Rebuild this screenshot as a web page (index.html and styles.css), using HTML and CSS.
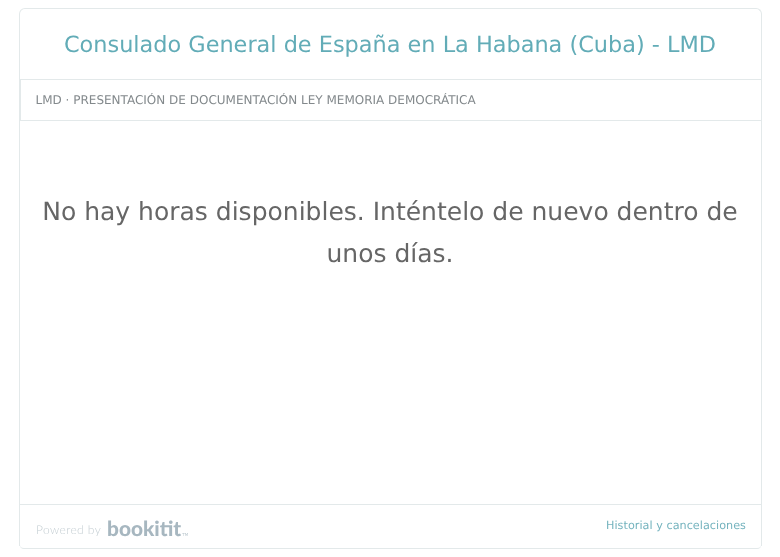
FILE: index.html
```html
<!DOCTYPE html>
<html lang="es">
<head>
<meta charset="utf-8">
<title>Consulado General de España en La Habana (Cuba) - LMD</title>
<link rel="stylesheet" href="styles.css">
</head>
<body>
<main class="card">
  <header class="head"><h1 class="title">Consulado General de España en La Habana (Cuba) - LMD</h1></header>
  <div class="service">LMD · PRESENTACIÓN DE DOCUMENTACIÓN LEY MEMORIA DEMOCRÁTICA</div>
  <section class="content"><p class="message">No hay horas disponibles. Inténtelo de nuevo dentro de unos días.</p></section>
  <footer class="foot">
    <div class="brand"><span class="powered">Powered by</span><span class="logo">bookitit</span><span class="tm">TM</span></div>
    <a class="history" href="#">Historial y cancelaciones</a>
  </footer>
</main>
</body>
</html>
```
FILE: styles.css
```css
* { box-sizing: border-box; }
html, body { height: 100%; }
body {
  margin: 0;
  background: #fff;
  font-family: "DejaVu Sans", sans-serif;
  text-rendering: geometricPrecision;
  padding: 8px 18px 0 19px;
}
.card {
  height: 538px;
  border: 1px solid #e3e9ea;
  border-bottom: 0;
  border-radius: 6px 6px 0 0;
  display: flex;
  flex-direction: column;
  will-change: opacity;
}
.head { height: 70px; display: flex; align-items: center; justify-content: center; padding: 2px 1px 0 0; }
.title { margin: 0; font-size: 22.4px; font-weight: 400; color: #62acb7; line-height: 1.2; }
.service {
  height: 42px;
  border: 1px solid #e3e9ea;
  border-width: 1px 0 1px 1px;
  padding: 0 14.5px;
  font-size: 12px;
  line-height: 40px;
  color: #83898c;
}
.content { flex: 1; padding: 70px 17px 0 16px; }
.message { margin: 0; text-align: center; font-size: 25px; line-height: 42px; color: #666; }
.foot {
  height: 45px;
  margin-bottom: -3px;
  border-top: 1px solid #e3e9ea;
  border-bottom: 1px solid #e3e9ea;
  border-radius: 0 0 4px 4px;
  display: flex;
  justify-content: space-between;
  padding: 0 15px 0 16px;
}
.brand { display: flex; align-items: center; height: 100%; padding-top: 5px; }
.powered { font-family: Lato, sans-serif; font-weight: 300; font-size: 12px; color: #c3cdd2; letter-spacing: 0.4px; margin-right: 7px; }
.logo { font-family: Lato, sans-serif; font-weight: 900; font-size: 20.8px; line-height: 24px; color: #a7b7c0; margin-left: -1px; }
.tm { font-size: 4px; color: #b9c6cd; margin: 10px 0 0 1px; }
.history { font-size: 11.2px; color: #74b3be; text-decoration: none; padding-top: 14px; letter-spacing: 0.04px; }
```
